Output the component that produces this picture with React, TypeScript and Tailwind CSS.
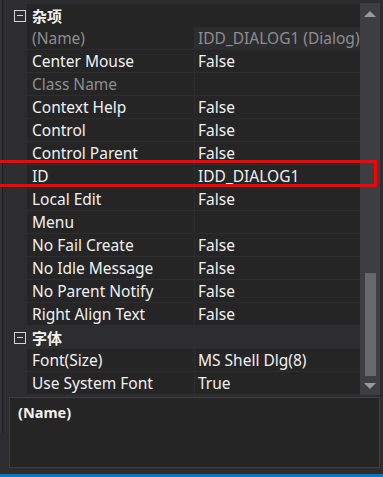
const font = { fontFamily: '"Noto Sans", "Noto Sans CJK SC", sans-serif' }

type Prop = { name: string; value?: string; dim?: boolean; light?: boolean }
type Group = { title: string; light?: boolean; props: Prop[] }

const groups: Group[] = [
    {
        title: "杂项",
        props: [
            { name: "(Name)", value: "IDD_DIALOG1 (Dialog)", dim: true, light: true },
            { name: "Center Mouse", value: "False" },
            { name: "Class Name", dim: true },
            { name: "Context Help", value: "False" },
            { name: "Control", value: "False" },
            { name: "Control Parent", value: "False" },
            { name: "ID", value: "IDD_DIALOG1" },
            { name: "Local Edit", value: "False" },
            { name: "Menu" },
            { name: "No Fail Create", value: "False" },
            { name: "No Idle Message", value: "False" },
            { name: "No Parent Notify", value: "False" },
            { name: "Right Align Text", value: "False" }
        ]
    },
    {
        title: "字体",
        light: true,
        props: [
            { name: "Font(Size)", value: "MS Shell Dlg(8)" },
            { name: "Use System Font", value: "True" }
        ]
    }
]

function Category({ title, light }: { title: string; light?: boolean }) {
    return (
        <div className={`flex h-[23px] items-center ${light ? "bg-[#2d2d30]" : "bg-[#252526]"}`}>
            <div className="flex h-full w-[18px] shrink-0 items-center justify-center bg-[#2d2d30]">
                <div className="relative ml-[3px] h-[12px] w-[12px] border border-[#d4d4d4]">
                    <div className="absolute left-[2px] top-[4.5px] h-[1px] w-[6px] bg-[#d4d4d4]" />
                </div>
            </div>
            <span className="pl-[5px] text-[15px] font-bold leading-[20px] text-[#f1f1f1]">{title}</span>
        </div>
    )
}

function Row({ prop }: { prop: Prop }) {
    const color = prop.dim ? "text-[#8e8e8e]" : "text-[#f1f1f1]"
    return (
        <div className="flex h-[23px]">
            <div className="w-[18px] shrink-0 bg-[#2d2d30]" />
            <div className="flex w-[168px] shrink-0 items-center overflow-hidden border-b border-r border-[#2d2d30] bg-[#252526]">
                <span className={`whitespace-nowrap pl-[5px] text-[15.5px] leading-[21px] ${color}`}>{prop.name}</span>
            </div>
            <div className={`flex flex-1 items-center overflow-hidden border-b border-[#2d2d30] ${prop.light ? "bg-[#2d2d30]" : "bg-[#252526]"}`}>
                <span className={`whitespace-nowrap pl-[3px] text-[15.5px] leading-[21px] ${color}`}>{prop.value}</span>
            </div>
        </div>
    )
}

function Scrollbar() {
    return (
        <div className="flex w-[20px] shrink-0 flex-col items-center bg-[#3e3e42]">
            <div className="mt-[8px] h-0 w-0 border-x-[6px] border-b-[6px] border-x-transparent border-b-[#999999]" />
            <div className="mt-auto h-[103px] w-[11px] bg-[#686868]" />
            <div className="mb-[6px] mt-[7px] h-0 w-0 border-x-[6px] border-t-[6px] border-x-transparent border-t-[#999999]" />
        </div>
    )
}

export default function App() {
    return (
        <div className="relative flex h-[477px] w-[383px] flex-col overflow-hidden bg-[#2d2d30]" style={font}>
            <div className="flex flex-1">
                <div className="flex w-[9px] shrink-0">
                    <div className="h-[433px] w-[2px] bg-[#333337]" />
                    <div className="h-[433px] w-[1px] bg-[#1e1e1e]" />
                </div>
                <div className="flex w-[371px] flex-col pt-[3px]">
                    <div className="flex h-[392px]">
                        <div className="flex flex-1 flex-col pt-[1px]">
                            {groups.map(g => (
                                <div key={g.title}>
                                    <Category title={g.title} light={g.light} />
                                    {g.props.map(p => (
                                        <Row key={p.name} prop={p} />
                                    ))}
                                </div>
                            ))}
                        </div>
                        <Scrollbar />
                    </div>
                    <div className="mt-[2px] h-[71px] border border-[#3f3f46] bg-[#252526] px-[8px] pt-[4px]">
                        <p className="text-[14.5px] font-bold leading-[20px] text-[#f1f1f1]">(Name)</p>
                    </div>
                </div>
            </div>
            <div className="h-[3px] bg-[#007acc]" />
            <div className="absolute left-[-4px] top-[160px] h-[27px] w-[381px] border-[3px] border-[#ff0000]" />
        </div>
    )
}
